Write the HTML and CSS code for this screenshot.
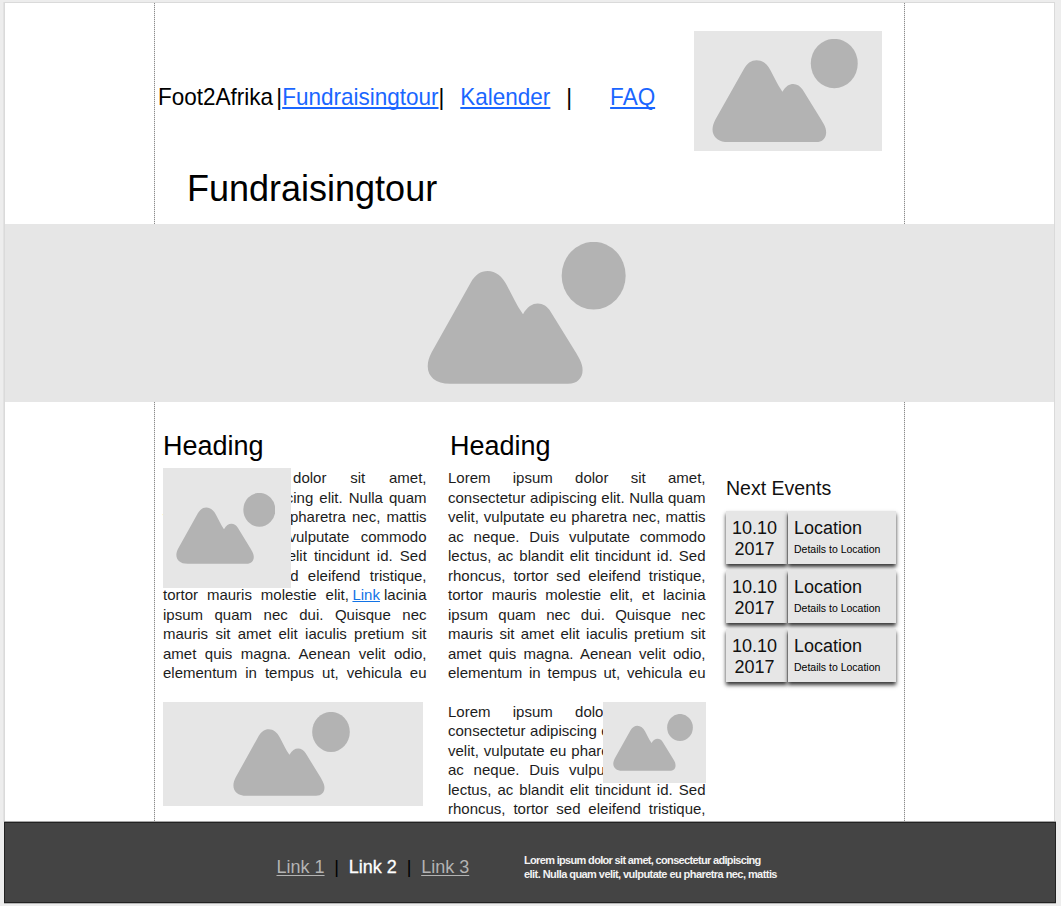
FILE: index.html
```html
<!DOCTYPE html>
<html lang="de">
<head>
<meta charset="utf-8">
<title>Fundraisingtour</title>
<link rel="stylesheet" href="styles.css">
</head>
<body>
<svg class="defs" aria-hidden="true">
  <symbol id="picture" viewBox="0 0 597 426" preserveAspectRatio="none">
    <path d="M182 87C161 87 145 98 131 122L14 331C-14 383 9 425 69 425H424C460 425 479 393 458 352L448 334L371 209C352 178 312 173 288 217Q272 194 264 177L239 129C226 103 206 87 182 87Z"/>
    <ellipse cx="500" cy="101" rx="96" ry="101.500"/>
  </symbol>
</svg>
<div class="page">
  <header class="top">
    <div class="top-text">
      <nav class="nav">
        <span>Foot2Afrika</span><span class="bar bar-a">|</span><a href="#">Fundraisingtour</a><span class="bar">|</span><a href="#" class="kalender">Kalender</a><span class="bar bar-c">|</span><a href="#" class="faq">FAQ</a>
      </nav>
      <h1>Fundraisingtour</h1>
    </div>
    <div class="ph ph-logo"><svg><use href="#picture"/></svg></div>
  </header>
  <div class="ph hero"><svg><use href="#picture"/></svg></div>
  <main class="content">
    <section class="col col-left">
      <h2>Heading</h2>
      <div class="copy">
        <p>Lorem ipsum dolor sit amet,</p>
        <p>consectetur adipiscing elit. Nulla quam</p>
        <p>velit, vulputate eu pharetra nec, mattis</p>
        <p>ac neque. Duis vulputate commodo</p>
        <p>lectus, ac blandit elit tincidunt id. Sed</p>
        <p>rhoncus, tortor sed eleifend tristique,</p>
        <p class="with-link"><span class="grow">tortor mauris molestie elit,</span><a href="#">Link</a><span>lacinia</span></p>
        <p>ipsum quam nec dui. Quisque nec</p>
        <p>mauris sit amet elit iaculis pretium sit</p>
        <p>amet quis magna. Aenean velit odio,</p>
        <p>elementum in tempus ut, vehicula eu</p>
        <div class="ph ph-over-left"><svg><use href="#picture"/></svg></div>
      </div>
      <div class="ph ph-wide"><svg><use href="#picture"/></svg></div>
    </section>
    <section class="col col-mid">
      <h2>Heading</h2>
      <div class="copy">
        <p>Lorem ipsum dolor sit amet,</p>
        <p>consectetur adipiscing elit. Nulla quam</p>
        <p>velit, vulputate eu pharetra nec, mattis</p>
        <p>ac neque. Duis vulputate commodo</p>
        <p>lectus, ac blandit elit tincidunt id. Sed</p>
        <p>rhoncus, tortor sed eleifend tristique,</p>
        <p>tortor mauris molestie elit, et lacinia</p>
        <p>ipsum quam nec dui. Quisque nec</p>
        <p>mauris sit amet elit iaculis pretium sit</p>
        <p>amet quis magna. Aenean velit odio,</p>
        <p>elementum in tempus ut, vehicula eu</p>
      </div>
      <div class="copy">
        <p>Lorem ipsum dolor sit amet,</p>
        <p>consectetur adipiscing elit. Nulla quam</p>
        <p>velit, vulputate eu pharetra nec, mattis</p>
        <p>ac neque. Duis vulputate commodo</p>
        <p>lectus, ac blandit elit tincidunt id. Sed</p>
        <p>rhoncus, tortor sed eleifend tristique,</p>
        <div class="ph ph-over-right"><svg><use href="#picture"/></svg></div>
      </div>
    </section>
    <aside class="events">
      <h3>Next Events</h3>
      <div class="event"><div class="date">10.10<br>2017</div><div class="place"><b>Location</b><small>Details to Location</small></div></div>
      <div class="event"><div class="date">10.10<br>2017</div><div class="place"><b>Location</b><small>Details to Location</small></div></div>
      <div class="event"><div class="date">10.10<br>2017</div><div class="place"><b>Location</b><small>Details to Location</small></div></div>
    </aside>
  </main>
</div>
<footer class="footer">
  <nav class="foot-nav"><a href="#">Link 1</a><i>|</i><span class="current">Link 2</span><i>|</i><a href="#">Link 3</a></nav>
  <p class="foot-text"><span class="first">Lorem ipsum dolor sit amet, consectetur adipiscing</span><br>elit. Nulla quam velit, vulputate eu pharetra nec, mattis</p>
</footer>
</body>
</html>
```

FILE: styles.css
```css
* { box-sizing: border-box; }
body {
  margin: 0;
  padding: 2px 0 0 4px;
  height: 906px;
  overflow: hidden;
  background: #ededed;
  color: #000;
  font-family: "Liberation Sans", Arial, sans-serif;
}
h1, h2, h3, p { margin: 0; font-weight: 400; }
.defs { position: absolute; width: 0; height: 0; }

.page {
  width: 1051px;
  height: 820px;
  overflow: hidden;
  border: solid #dadada;
  border-width: 1px 1px 0;
  box-shadow: -1px 0 #e2e2e2;
  background: #fff;
}
.top, .content {
  width: 751px;
  margin-left: 149px;
  border: solid transparent;
  border-width: 0 1px;
  background:
    repeating-linear-gradient(#8c8c8c 0 1px, #e2e2e2 1px 2px) 0 0 / 1px 100% no-repeat border-box,
    repeating-linear-gradient(#8c8c8c 0 1px, #e2e2e2 1px 2px) 100% 0 / 1px 100% no-repeat border-box;
}
.top { display: flex; height: 221px; padding-left: 2px; }
.top-text { width: 537px; padding-top: 80px; }
.nav {
  display: flex;
  width: 560px;
  height: 28px;
  margin-left: 1px;
  font-size: 24px;
  line-height: 28px;
  white-space: nowrap;
  transform: scaleX(.9375);
  transform-origin: left;
}
.nav a { color: #1a66ff; text-decoration-thickness: 2px; text-underline-offset: 2px; text-decoration-skip-ink: none; }
.bar-a { margin-left: 3.500px; }
.kalender { margin-left: 17px; }
.bar-c { margin-left: 17px; }
.faq { margin-left: 40.500px; }
h1 { margin: 57px 0 0 30px; font-size: 36px; line-height: 42px; }

.ph { background: #e6e6e6; display: flex; }
.ph svg { display: block; fill: #b3b3b3; }
.ph-logo { width: 188px; height: 120px; margin-top: 27.500px; padding: 8px 0 0 18px; }
.ph-logo svg { width: 146px; height: 103.500px; }
.hero { height: 178px; padding: 18px 0 0 422px; }
.hero svg { width: 199px; height: 142px; }

.content { display: flex; height: 421px; padding: 27px 0 0 8px; }
h2 { padding-top: 1px; height: 32px; font-size: 27px; line-height: 32px; }
.col-left { width: 263.500px; }
.col-mid { width: 257.500px; margin-left: 21.500px; }
.col-mid h2 { padding-left: 2px; }
.copy {
  position: relative;
  margin-top: 7px;
  color: #1c1c1c;
  font-size: 15px;
  line-height: 19.500px;
}
.copy + .copy { margin-top: 19px; }
.copy p { height: 19.500px; white-space: nowrap; text-align: justify; text-align-last: justify; }
.copy .with-link { display: flex; }
.copy .with-link a { margin: 0 4px 0 3.500px; color: #1273e6; }
.grow { flex: 1; white-space: normal; }
.ph-over-left { position: absolute; left: 0; top: 0; width: 128px; height: 120px; padding: 25px 0 0 12.500px; }
.ph-over-left svg { width: 99.500px; height: 71px; }
.ph-over-right { position: absolute; right: 0; top: 0; width: 103px; height: 81px; padding: 12px 0 0 10px; }
.ph-over-right svg { width: 80px; height: 57px; }
.ph-wide { width: 260px; height: 104px; margin-top: 19px; padding: 10px 0 0 69.500px; }
.ph-wide svg { width: 117px; height: 84px; }

.events { width: 171px; margin: 47px 0 0 20.500px; color: #111; }
h3 { font-size: 19.500px; line-height: 24px; margin-bottom: 11px; }
.event { display: flex; gap: 1px; height: 53px; margin-bottom: 6px; }
.date, .place { background: #e6e6e6; box-shadow: 0 3px 4px rgba(0, 0, 0, .8); }
.date { width: 61px; padding: 7px 4px 0 0; text-align: center; font-size: 18px; line-height: 20.500px; }
.place { width: 108px; padding: 7px 0 0 6px; }
.place b { display: block; font-weight: 400; font-size: 18px; line-height: 21px; }
.place small { display: block; margin-top: 4px; font-size: 10.500px; line-height: 12px; color: #000; }

.footer {
  position: relative;
  display: flex;
  width: 1052px;
  height: 81px;
  padding: 34px 0 0 271.500px;
  border: 1px solid #222;
  box-shadow: 0 1px #b5b5b5, 0 -1px #a5a5a5;
  background: #444;
}
.foot-nav { display: flex; width: 247.500px; font-size: 18px; line-height: 20px; color: #fff; white-space: nowrap; }
.foot-nav a { color: #b3b3b3; text-underline-offset: 2px; }
.foot-nav .current { -webkit-text-stroke: .3px #fff; }
.foot-nav i { width: 24.300px; text-align: center; font-style: normal; color: #000; }
.foot-text { margin-top: -4px; font-size: 11px; font-weight: 700; line-height: 14px; letter-spacing: -.560px; color: #f2f2f2; white-space: nowrap; }
.first { letter-spacing: -.670px; }
```
